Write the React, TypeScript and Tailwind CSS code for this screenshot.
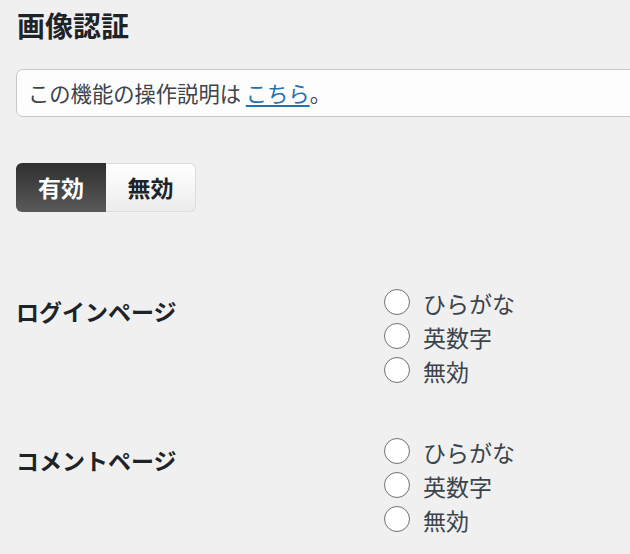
import React from "react";

const font = { fontFamily: '"Noto Sans CJK JP", "Noto Sans", sans-serif' };

function Radio({ label }: { label: string }) {
  return (
    <div className="flex items-center h-[34px]">
      <span className="w-[26px] h-[26px] rounded-full border-[1.5px] border-[#6e7175] bg-white shrink-0 mt-[2px]" />
      <span className="ml-[13px] mt-[4px] text-[23px] leading-none text-[#3c434a]">{label}</span>
    </div>
  );
}

function Row({ title }: { title: string }) {
  return (
    <div className="flex">
      <div className="w-[368px] pt-[10px] text-[23px] leading-[34px] font-bold text-[#1d2327]">{title}</div>
      <div className="flex flex-col">
        <Radio label="ひらがな" />
        <Radio label="英数字" />
        <Radio label="無効" />
      </div>
    </div>
  );
}

export default function App() {
  return (
    <div className="w-[630px] h-[554px] overflow-hidden bg-[#f0f0f1] pl-4" style={font}>
      <h2 className="pt-[7px] text-[28px] leading-[36px] font-bold text-[#1d2327] ml-[1px]">画像認証</h2>
      <div className="mt-[26px] w-[700px] h-[48px] flex items-center border border-[#c8c8c8] rounded-[7px] bg-[#fdfdfd] pl-[11px] text-[21.3px] text-[#3c434a]">
        <span>
          この機能の操作説明は{" "}
          <a className="text-[#2271b1] underline underline-offset-[3px]" href="#">こちら</a>。
        </span>
      </div>
      <div className="mt-[46px] flex w-[180px] h-[49px]">
        <div className="w-[90px] flex items-center justify-center rounded-l-[6px] bg-gradient-to-b from-[#2f2f2f] to-[#5a5a5a] text-white text-[23px] font-bold">
          有効
        </div>
        <div className="w-[90px] flex items-center justify-center rounded-r-[6px] border border-l-0 border-[#dcdcdc] bg-gradient-to-b from-white to-[#ececec] text-[#1d2327] text-[23px] font-bold">
          無効
        </div>
      </div>
      <div className="mt-[72px]">
        <Row title="ログインページ" />
      </div>
      <div className="mt-[47px]">
        <Row title="コメントページ" />
      </div>
    </div>
  );
}
